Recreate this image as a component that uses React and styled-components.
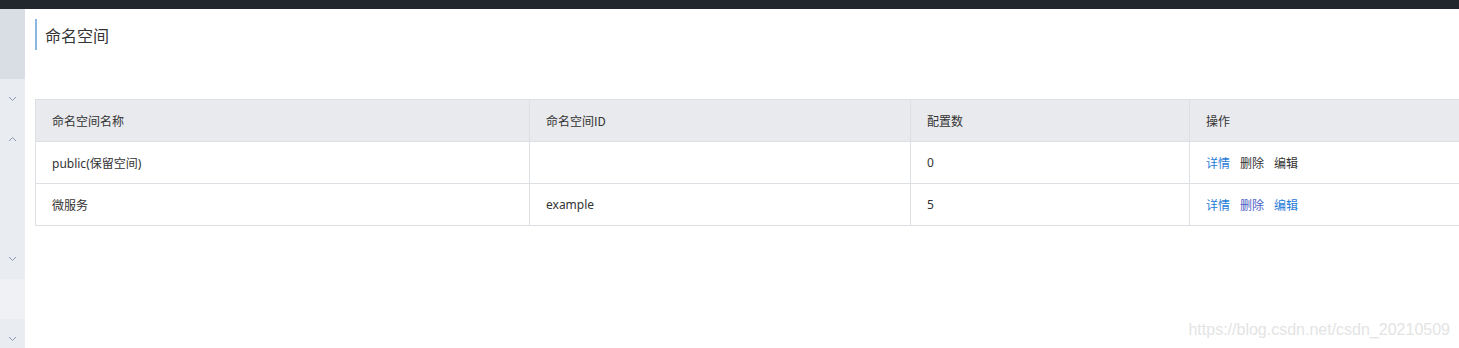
import React from "react";
import styled, { createGlobalStyle } from "styled-components";

const Global = createGlobalStyle`
  html, body { margin: 0; padding: 0; background: #fff; overflow: hidden; }
  body { font-family: "Noto Sans CJK SC", "Noto Sans", sans-serif; color: #333; }
`;

const Page = styled.div`
  position: relative;
  width: 1459px;
  height: 348px;
  overflow: hidden;
  display: flex;
  flex-direction: column;
`;

const TopBar = styled.div`
  height: 9px;
  background: #22272e;
  flex: none;
`;

const Body = styled.div`
  flex: 1;
  display: flex;
  min-height: 0;
`;

const Sidebar = styled.div`
  width: 25px;
  flex: none;
  display: flex;
  flex-direction: column;
  background: #e9ecf1;
`;

const SideItem = styled.div`
  height: ${(p) => p.$h}px;
  flex: none;
  background: ${(p) => p.$bg || "#e9ecf1"};
  display: flex;
  align-items: center;
  justify-content: center;
`;

const Main = styled.div`
  flex: 1;
  min-width: 0;
  padding: 10px 0 0 10px;
  overflow: hidden;
`;

const Title = styled.div`
  height: 31px;
  border-left: 2px solid #8ab6df;
  padding-left: 8px;
  display: flex;
  align-items: center;
  font-size: 16px;
  color: #333;
`;

const Table = styled.table`
  margin-top: 49px;
  width: 1460px;
  border-collapse: collapse;
  table-layout: fixed;
  font-size: 12px;
  border: 1px solid #dcdfe4;
`;

const Col = styled.col`
  width: ${(p) => p.$w}px;
`;

const Th = styled.th`
  height: 41px;
  background: #e9eaed;
  font-weight: normal;
  text-align: left;
  padding: 0 0 0 16px;
  color: #333;
  border: 1px solid #dcdfe4;
`;

const Td = styled.td`
  height: 41px;
  padding: 0 0 0 16px;
  color: #333;
  border: 1px solid #dcdfe4;
  font-family: "Noto Sans", "Noto Sans CJK SC", sans-serif;
`;

const Action = styled.a`
  color: ${(p) => p.$color};
  margin-right: 10px;
  text-decoration: none;
  cursor: pointer;
`;

const Watermark = styled.div`
  position: absolute;
  right: 9px;
  bottom: 9px;
  font-family: "Liberation Sans", Arial, sans-serif;
  font-size: 16px;
  color: #e4e4e4;
`;

const Chevron = ({ up }) => (
  <svg width="9" height="6" viewBox="0 0 9 6">
    <path
      d={up ? "M1 5 L4.5 1.5 L8 5" : "M1 1 L4.5 4.5 L8 1"}
      fill="none"
      stroke="#8b98ab"
      strokeWidth="1"
    />
  </svg>
);

const rows = [
  { name: "public(保留空间)", id: "", count: "0", colors: ["#1f7bd6", "#333", "#333"] },
  { name: "微服务", id: "example", count: "5", colors: ["#1f7bd6", "#4a60c4", "#1f7bd6"] },
];

export default function App() {
  return (
    <Page>
      <Global />
      <TopBar />
      <Body>
        <Sidebar>
          <SideItem $h={70} $bg="#d9dee5" />
          <SideItem $h={40}><Chevron /></SideItem>
          <SideItem $h={40}><Chevron up /></SideItem>
          <SideItem $h={80} />
          <SideItem $h={40}><Chevron /></SideItem>
          <SideItem $h={40} $bg="#eff1f5" />
          <SideItem $h={40}><Chevron /></SideItem>
        </Sidebar>
        <Main>
          <Title>命名空间</Title>
          <Table>
            <colgroup>
              <Col $w={494} />
              <Col $w={381} />
              <Col $w={279} />
              <Col $w={306} />
            </colgroup>
            <thead>
              <tr>
                <Th>命名空间名称</Th>
                <Th>命名空间ID</Th>
                <Th>配置数</Th>
                <Th>操作</Th>
              </tr>
            </thead>
            <tbody>
              {rows.map((r) => (
                <tr key={r.name}>
                  <Td>{r.name}</Td>
                  <Td>{r.id}</Td>
                  <Td>{r.count}</Td>
                  <Td>
                    <Action $color={r.colors[0]}>详情</Action>
                    <Action $color={r.colors[1]}>删除</Action>
                    <Action $color={r.colors[2]}>编辑</Action>
                  </Td>
                </tr>
              ))}
            </tbody>
          </Table>
        </Main>
      </Body>
      <Watermark>https://blog.csdn.net/csdn_20210509</Watermark>
    </Page>
  );
}
